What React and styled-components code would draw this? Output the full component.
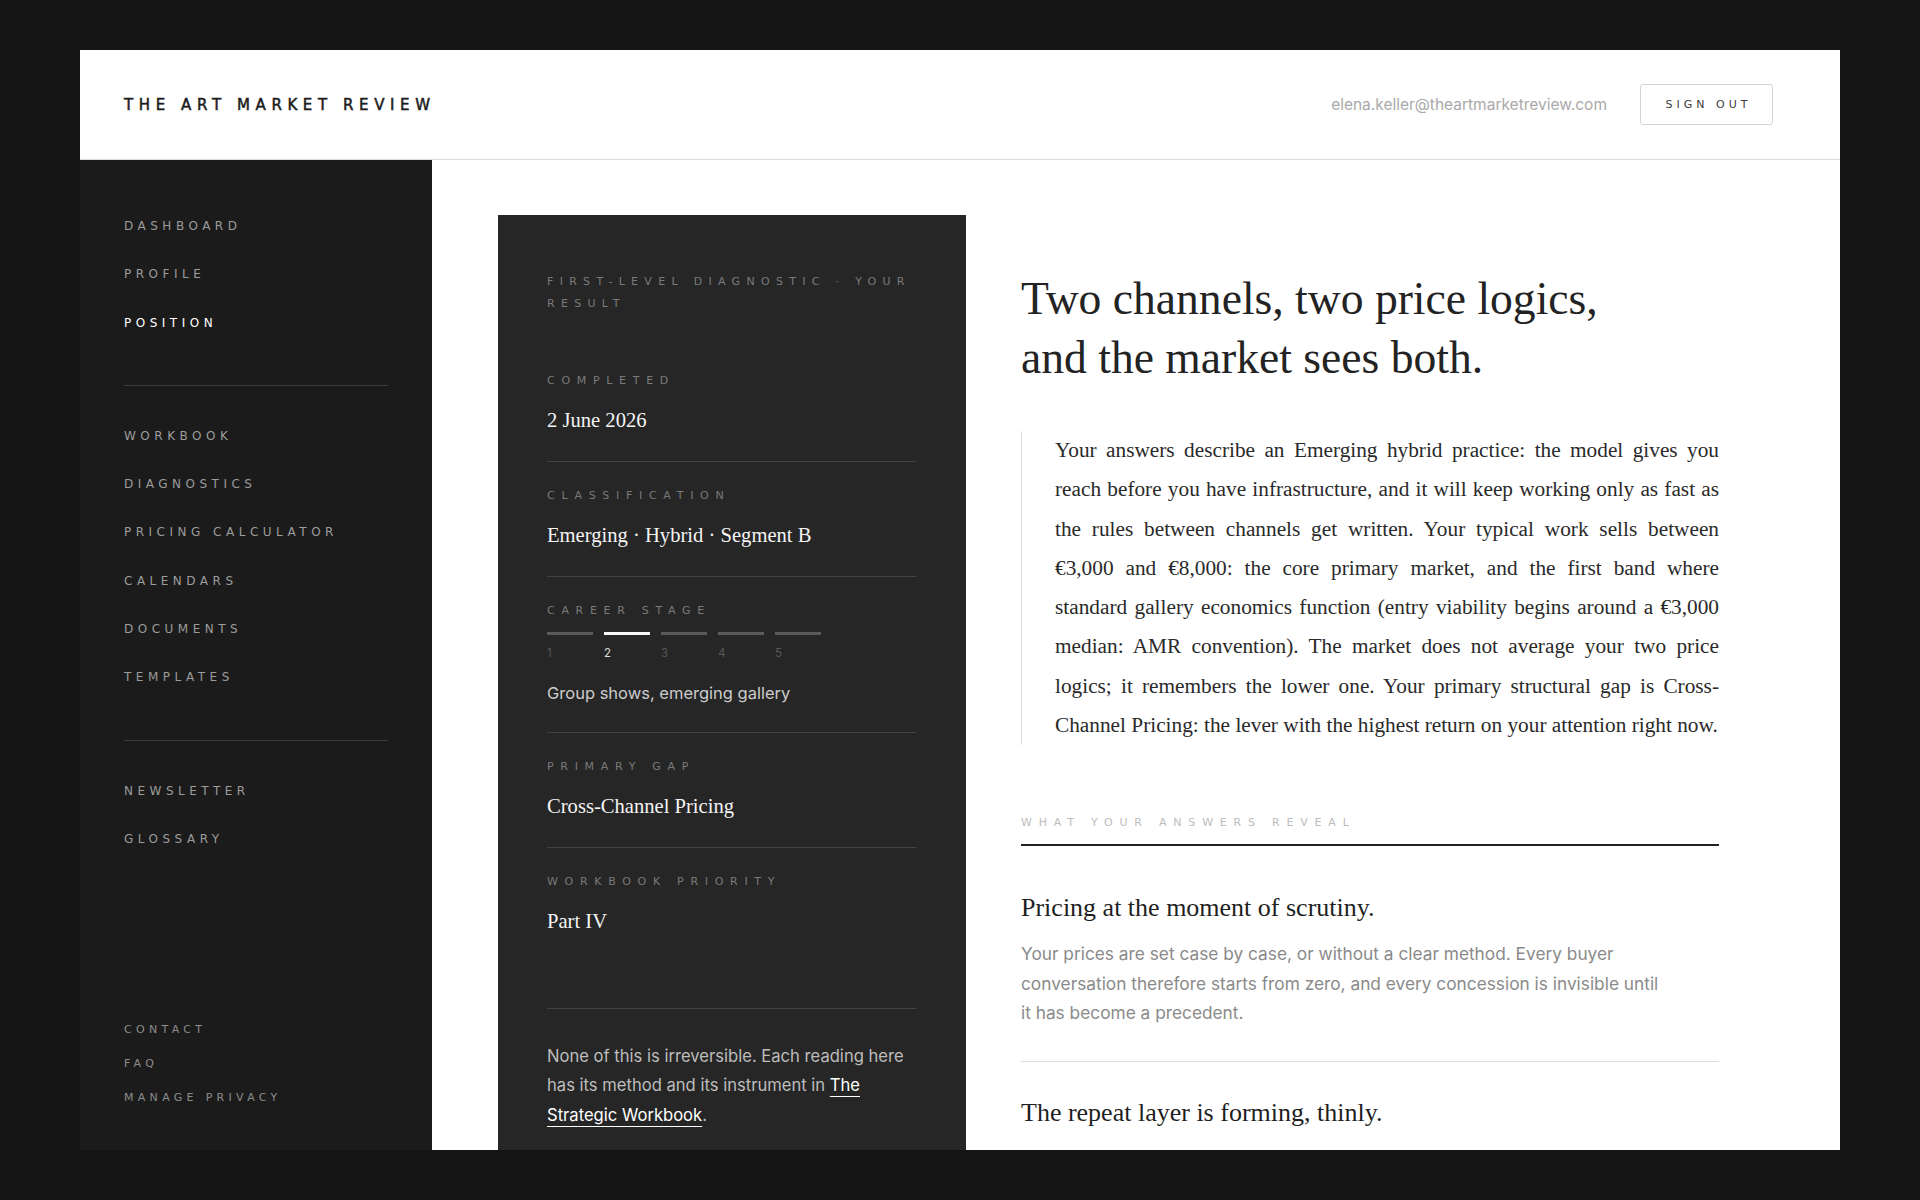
import React from "react";
import styled, { createGlobalStyle } from "styled-components";

// #region - styling -

const wide = `"DejaVu Sans", "Liberation Sans", sans-serif`;
const serif = `"Liberation Serif", "Times New Roman", serif`;
const sans = `"Inter", "Liberation Sans", sans-serif`;

const GlobalStyle = createGlobalStyle`
  html, body {
    margin: 0;
    padding: 0;
    background: #141414;
  }
  body {
    font-family: ${sans};
    -webkit-font-smoothing: antialiased;
  }
  * {
    box-sizing: border-box;
  }
`;

const Frame = styled.div`
  margin: 50px 80px;
  height: 1100px;
  background: #ffffff;
  display: flex;
  flex-direction: column;
  overflow: hidden;
`;

const Header = styled.header`
  flex: 0 0 110px;
  border-bottom: 1px solid #dcdcdc;
  display: flex;
  align-items: center;
  justify-content: space-between;
  padding: 0 67px 0 44px;
`;

const Logo = styled.div`
  font-family: ${wide};
  font-size: 15px;
  letter-spacing: 5.6px;
  color: #1c1c1c;
  -webkit-text-stroke: 0.5px #1c1c1c;
`;

const Account = styled.div`
  display: flex;
  align-items: center;
  gap: 33px;
`;

const Email = styled.span`
  font-family: ${sans};
  font-size: 15.5px;
  color: #a9a9a9;
`;

const SignOut = styled.button`
  width: 133px;
  height: 41px;
  border: 1px solid #d4d4d4;
  border-radius: 3px;
  background: #fff;
  font-family: ${wide};
  font-size: 11px;
  letter-spacing: 4px;
  padding: 0 0 0 4px;
  color: #3c3c3c;
`;

const Layout = styled.div`
  flex: 1;
  display: flex;
  min-height: 0;
`;

const Sidebar = styled.nav`
  flex: 0 0 352px;
  background: #1b1b1b;
  padding: 42px 44px 35px;
  display: flex;
  flex-direction: column;
`;

const NavLink = styled.a`
  display: block;
  font-family: ${wide};
  font-size: 12px;
  line-height: 16.3px;
  padding: 16px 0;
  letter-spacing: 4.5px;
  color: ${(p) => (p.$active ? "#ffffff" : "#9c9c9c")};
`;

const NavRule = styled.div`
  height: 1px;
  background: #3a3a3a;
  margin: 38px 0 26px;
`;

const SideFooter = styled.div`
  margin-top: auto;
`;

const FooterLink = styled.a`
  display: block;
  font-family: ${wide};
  font-size: 11px;
  line-height: 16px;
  padding: 9px 0;
  letter-spacing: 4.3px;
  color: #8c8c8c;
`;

const Main = styled.main`
  flex: 1;
  display: flex;
  align-items: flex-start;
  gap: 55px;
  padding: 55px 0 0 66px;
  overflow: hidden;
`;

const Card = styled.section`
  flex: 0 0 468px;
  background: #262626;
  padding: 56px 50px 60px 49px;
`;

const Eyebrow = styled.div`
  font-family: ${wide};
  font-size: 11px;
  line-height: 22px;
  letter-spacing: 6.3px;
  color: #7a7a7a;
  margin-bottom: 32px;
`;

const Row = styled.div`
  padding: 26px 0 27px;
  border-bottom: ${(p) => (p.$last ? "none" : "1px solid #424242")};
`;

const Label = styled.div`
  font-family: ${wide};
  font-size: 11px;
  line-height: 16px;
  letter-spacing: 6.7px;
  color: #7a7a7a;
`;

const Value = styled.div`
  font-family: ${serif};
  font-size: 20.6px;
  line-height: 28px;
  color: #f4f4f4;
  margin-top: 17px;
`;

const Stages = styled.div`
  display: flex;
  gap: 11px;
  margin-top: 13px;
`;

const Stage = styled.div`
  width: 46px;
  display: flex;
  flex-direction: column;
  gap: 11px;
`;

const StageBar = styled.div`
  height: 3px;
  background: ${(p) => (p.$active ? "#f6f6f6" : "#5a5a5a")};
`;

const StageNum = styled.span`
  font-family: ${sans};
  font-size: 11.5px;
  line-height: 14px;
  color: ${(p) => (p.$active ? "#dcdcdc" : "#585858")};
`;

const StageNote = styled.div`
  font-family: ${sans};
  font-size: 16.5px;
  line-height: 24px;
  color: #cccccc;
  margin-top: 21px;
`;

const Note = styled.p`
  margin: 46px 0 0;
  padding-top: 33px;
  border-top: 1px solid #424242;
  font-family: ${sans};
  font-size: 16.6px;
  line-height: 29.3px;
  color: #bdbdbd;
`;

const NoteLink = styled.a`
  color: #ffffff;
  text-decoration: underline;
  text-decoration-thickness: 1px;
  text-underline-offset: 5px;
`;

const Reading = styled.article`
  flex: 0 0 698px;
  padding-top: 55px;
`;

const Title = styled.h1`
  margin: 0 0 44px;
  font-family: ${serif};
  font-weight: 400;
  font-size: 45.6px;
  line-height: 58.5px;
  color: #232323;
`;

const Quote = styled.blockquote`
  margin: 0;
  padding-left: 33px;
  border-left: 1.5px solid #dedede;
  font-family: ${serif};
  font-size: 21.3px;
  line-height: 39.3px;
  color: #2a2a2a;
  text-align: justify;
`;

const SectionHead = styled.div`
  margin-top: 70px;
  padding-bottom: 13px;
  border-bottom: 2px solid #222;
  font-family: ${wide};
  font-size: 11px;
  line-height: 16px;
  letter-spacing: 6.8px;
  color: #bdbdbd;
`;

const Findings = styled.div`
  margin-top: 11px;
`;

const Finding = styled.div`
  padding: 34px 0 33px;
  border-bottom: 1px solid #dcdcdc;
`;

const FindingTitle = styled.h2`
  margin: 0;
  font-family: ${serif};
  font-weight: 400;
  font-size: 26px;
  line-height: 34px;
  color: #1f1f1f;
`;

const FindingText = styled.p`
  margin: 14px 0 0;
  max-width: 645px;
  font-family: ${sans};
  font-size: 17.3px;
  line-height: 29.4px;
  color: #8a8a8a;
`;

// #endregion

const mainNav = ["DASHBOARD", "PROFILE", "POSITION"];
const toolsNav = [
  "WORKBOOK",
  "DIAGNOSTICS",
  "PRICING CALCULATOR",
  "CALENDARS",
  "DOCUMENTS",
  "TEMPLATES",
];
const extraNav = ["NEWSLETTER", "GLOSSARY"];
const footerNav = ["CONTACT", "FAQ", "MANAGE PRIVACY"];

const findings = [
  {
    title: "Pricing at the moment of scrutiny.",
    text: "Your prices are set case by case, or without a clear method. Every buyer conversation therefore starts from zero, and every concession is invisible until it has become a precedent.",
  },
  {
    title: "The repeat layer is forming, thinly.",
    text: "Some buyers return, but not on a schedule you control. The timing of the second purchase is left to the collector, and the relationship depends on memory.",
  },
];

export default function App() {
  const stage = 2;

  return (
    <>
      <GlobalStyle />
      <Frame>
        <Header>
          <Logo>THE ART MARKET REVIEW</Logo>
          <Account>
            <Email>elena.keller@theartmarketreview.com</Email>
            <SignOut>SIGN OUT</SignOut>
          </Account>
        </Header>

        <Layout>
          <Sidebar>
            <div>
              {mainNav.map((item) => (
                <NavLink key={item} $active={item === "POSITION"}>
                  {item}
                </NavLink>
              ))}
            </div>
            <NavRule />
            <div>
              {toolsNav.map((item) => (
                <NavLink key={item}>{item}</NavLink>
              ))}
            </div>
            <NavRule />
            <div>
              {extraNav.map((item) => (
                <NavLink key={item}>{item}</NavLink>
              ))}
            </div>
            <SideFooter>
              {footerNav.map((item) => (
                <FooterLink key={item}>{item}</FooterLink>
              ))}
            </SideFooter>
          </Sidebar>

          <Main>
            <Card>
              <Eyebrow>FIRST-LEVEL DIAGNOSTIC · YOUR RESULT</Eyebrow>

              <Row>
                <Label>COMPLETED</Label>
                <Value>2 June 2026</Value>
              </Row>
              <Row>
                <Label>CLASSIFICATION</Label>
                <Value>Emerging · Hybrid · Segment B</Value>
              </Row>
              <Row>
                <Label>CAREER STAGE</Label>
                <Stages>
                  {[1, 2, 3, 4, 5].map((n) => (
                    <Stage key={n}>
                      <StageBar $active={n === stage} />
                      <StageNum $active={n === stage}>{n}</StageNum>
                    </Stage>
                  ))}
                </Stages>
                <StageNote>Group shows, emerging gallery</StageNote>
              </Row>
              <Row>
                <Label>PRIMARY GAP</Label>
                <Value>Cross-Channel Pricing</Value>
              </Row>
              <Row $last>
                <Label>WORKBOOK PRIORITY</Label>
                <Value>Part IV</Value>
              </Row>

              <Note>
                None of this is irreversible. Each reading here has its method
                and its instrument in{" "}
                <NoteLink href="#">The Strategic Workbook</NoteLink>.
              </Note>
            </Card>

            <Reading>
              <Title>
                Two channels, two price logics,
                <br />
                and the market sees both.
              </Title>

              <Quote>
                Your answers describe an Emerging hybrid practice: the model
                gives you reach before you have infrastructure, and it will keep
                working only as fast as the rules between channels get written.
                Your typical work sells between €3,000 and €8,000: the core
                primary market, and the first band where standard gallery
                economics function (entry viability begins around a €3,000
                median: AMR convention). The market does not average your two
                price logics; it remembers the lower one. Your primary
                structural gap is Cross-Channel Pricing: the lever with the
                highest return on your attention right now.
              </Quote>

              <SectionHead>WHAT YOUR ANSWERS REVEAL</SectionHead>

              <Findings>
                {findings.map((f) => (
                  <Finding key={f.title}>
                    <FindingTitle>{f.title}</FindingTitle>
                    <FindingText>{f.text}</FindingText>
                  </Finding>
                ))}
              </Findings>
            </Reading>
          </Main>
        </Layout>
      </Frame>
    </>
  );
}
